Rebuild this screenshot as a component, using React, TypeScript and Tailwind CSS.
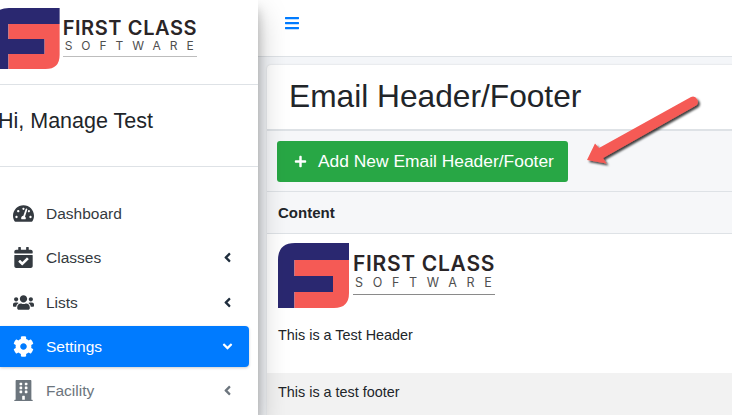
import React from "react";
import { FaTachometerAlt, FaCalendarCheck, FaUsers, FaCog, FaBuilding, FaAngleLeft, FaAngleDown, FaBars, FaPlus } from "react-icons/fa";

function Logo({ h, box, text, sub, subGap, lineColor }: { h: number; box: string; text: string; sub: string; subGap: string; lineColor: string }) {
  return (
    <div className="flex items-start">
      <svg viewBox="0 0 71 65" style={{ height: h, width: (h * 71) / 65 }} className="shrink-0">
        <path d="M0 65V17Q0 0 17 0H71V17H16.5V33H55V49H16.5V65Z" fill="#2a2870" />
        <path d="M16.5 17H71V50Q71 65 56 65H16.5V49H55V33H16.5Z" fill="#f55a55" />
      </svg>
      <div className={`${box} flex flex-col font-['Inter','Liberation_Sans',sans-serif]`}>
        <div className={`${text} font-semibold leading-none text-[#2a2527] whitespace-nowrap`}>FIRST CLASS</div>
        <div className={`${sub} ${subGap} leading-none text-[#4f4f4f] whitespace-nowrap pl-[2px]`}>SOFTWARE</div>
        <div className={`h-px ${lineColor} mt-[4px]`} />
      </div>
    </div>
  );
}

function NavItem({ icon, label, arrow, active, muted, h }: { icon: React.ReactNode; label: string; arrow?: React.ReactNode; active?: boolean; muted?: boolean; h: string }) {
  const color = active ? "text-white" : muted ? "text-[#6c757d]" : "text-[#343a40]";
  return (
    <div className={`${h} flex items-center justify-between rounded-r-[4px] mr-[9px] ${active ? "bg-[#007bff] shadow-[0_1px_3px_rgba(0,0,0,0.2)]" : ""} ${color}`}>
      <div className="flex items-center">
        <span className="w-[46px] flex justify-center pl-[2px] pr-[1px] text-[21px]">{icon}</span>
        <span className="text-[15.5px]">{label}</span>
      </div>
      {arrow && <span className={`mr-[14px] text-[15px] ${active ? "text-white" : muted ? "text-[#6c757d]" : "text-[#1f2d3d]"}`}>{arrow}</span>}
    </div>
  );
}

export default function App() {
  return (
    <div className="w-[732px] h-[415px] overflow-hidden flex bg-[#f4f6f9] font-['Liberation_Sans',sans-serif] text-[#212529]">
      <aside className="relative z-10 w-[258px] shrink-0 bg-white shadow-[0_14px_28px_rgba(0,0,0,0.25),0_10px_10px_rgba(0,0,0,0.22)] flex flex-col">
        <div className="h-[85px] border-b border-[#dee2e6] pt-[8px] -ml-[7px]">
          <Logo h={61} box="mt-[10px] ml-[3px] w-[134px]" text="text-[20px] tracking-[0.6px]" sub="text-[12px] tracking-[9px]" subGap="mt-[2px]" lineColor="bg-[#bdbdbd]" />
        </div>
        <div className="h-[82px] border-b border-[#dee2e6] flex items-center pb-[9px] -ml-[2px] text-[21.5px]">Hi, Manage Test</div>
        <nav className="pt-[24px] flex flex-col">
          <NavItem h="h-[45px]" icon={<FaTachometerAlt />} label="Dashboard" />
          <NavItem h="h-[43px]" icon={<FaCalendarCheck />} label="Classes" arrow={<FaAngleLeft />} />
          <NavItem h="h-[47px]" icon={<FaUsers />} label="Lists" arrow={<FaAngleLeft />} />
          <NavItem h="h-[41px]" active icon={<FaCog />} label="Settings" arrow={<FaAngleDown />} />
          <NavItem h="h-[47px]" muted icon={<FaBuilding />} label="Facility" arrow={<FaAngleLeft />} />
        </nav>
      </aside>
      <main className="flex-1 min-w-0 flex flex-col">
        <header className="h-[57px] shrink-0 bg-white border-b border-[#dee2e6] flex items-center pl-[26px]">
          <FaBars className="text-[#007bff] text-[16px] -mt-[10px]" />
        </header>
        <section className="relative flex-1 ml-[9px] mt-[8px] -mr-[10px] bg-white rounded-t-[4px] shadow-[0_0_2px_rgba(0,0,0,0.15)]">
          <div className="h-[66px] border-b-2 border-[#dee2e6] flex items-center pl-[22px] text-[31.7px]">Email Header/Footer</div>
          <div className="h-[60px] bg-[#f6f7f9] flex items-center pl-[10px]">
            <button className="h-[41px] w-[291px] rounded-[3px] bg-[#28a745] text-white flex items-center pl-[17px] text-[17.4px]">
              <FaPlus className="text-[13px] mr-[11px]" />
              Add New Email Header/Footer
            </button>
          </div>
          <div className="h-[43px] bg-[#f6f7f9] border-y border-[#dee2e6] flex items-center pl-[11px] pt-[1px] text-[15px] font-bold">Content</div>
          <div className="h-[139px] bg-white pl-[11px] pt-[9px]">
            <Logo h={65} box="mt-[10px] ml-[4px] w-[142px]" text="text-[21px] tracking-[0.7px]" sub="text-[12.5px] tracking-[9.7px]" subGap="mt-[3px]" lineColor="bg-[#8a8a8a]" />
            <div className="mt-[17px] text-[14.4px]">This is a Test Header</div>
          </div>
          <div className="h-[50px] bg-[#f2f2f2] pl-[11px] pt-[9px] text-[14.4px]">This is a test footer</div>
          <svg className="absolute left-[316px] top-[30px]" width="130" height="80" viewBox="0 0 130 80">
            <defs>
              <filter id="s" x="-20%" y="-20%" width="150%" height="150%">
                <feDropShadow dx="2" dy="2" stdDeviation="1" floodColor="#000" floodOpacity="0.75" />
              </filter>
            </defs>
            <path d="M108 2A5 5 0 0 1 113 10.500L20 63L23.500 68.500L4 65L12 48.500L16 53Z" fill="#f55a55" filter="url(#s)" />
          </svg>
        </section>
      </main>
    </div>
  );
}
